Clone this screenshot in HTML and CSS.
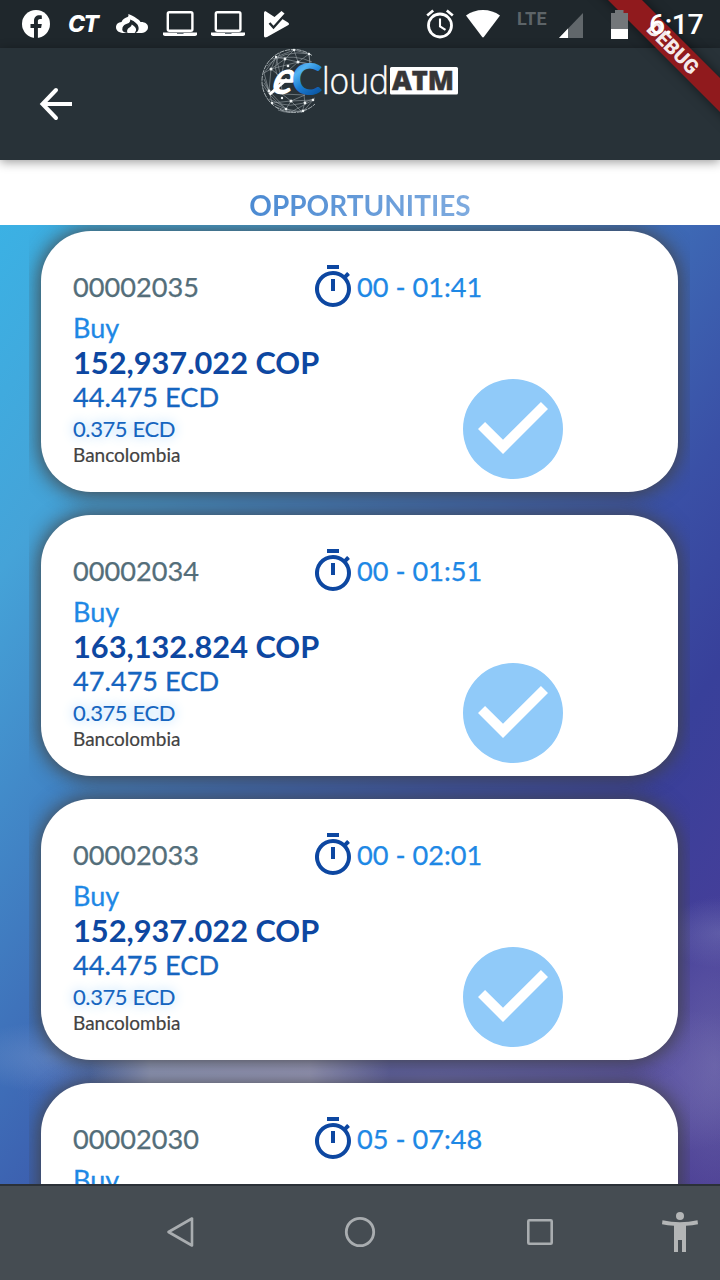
FILE: index.html
```html
<!DOCTYPE html>
<html lang="en">
<head>
<meta charset="utf-8">
<title>eCloudATM</title>
<link rel="stylesheet" href="styles.css">
</head>
<body>
<svg class="defs" width="0" height="0">
  <symbol id="timer" viewBox="0 0 24 24"><path d="M15 1H9v2h6V1zm-4 13h2V8h-2v6zm8.03-6.61l1.42-1.42c-.43-.51-.9-.99-1.41-1.41l-1.42 1.42A8.96 8.96 0 0 0 12 4a9 9 0 1 0 7.03 3.39zM12 20a7 7 0 1 1 0-14 7 7 0 0 1 0 14z"/></symbol>
  <symbol id="check" viewBox="0 0 24 24"><path d="M12 2a10 10 0 1 0 0 20 10 10 0 0 0 0-20zm-2 15l-5-5 1.41-1.41L10 14.17l7.59-7.59L19 8l-9 9z"/></symbol>
  <symbol id="laptop" viewBox="0 0 34 26"><rect x="4.8" y="1.3" width="24.6" height="18.4" rx="1.5" fill="none" stroke="#fff" stroke-width="2.4"/><path d="M0 21.6h34v1.6q0 1.8-2 1.8H2q-2 0-2-1.8z" fill="#fff"/><path d="M14 22h6.500v1h-6.500z" fill="#657078"/></symbol>
</svg>
<div class="screen">
  <header class="statusbar">
    <div class="notifications">
      <svg class="s-fb" width="28" height="28" viewBox="0 0 28 28"><circle cx="14" cy="14" r="14" fill="#fff"/><path d="M12 28V18H8.500v-4H12v-3.200C12 7.200 14.200 5.200 17.400 5.200c1.200 0 2.400.2 2.400.2V9h-1.700c-1.700 0-2.200 1-2.200 2.200V14h3.900l-.7 4h-3.200v10z" fill="#1f272c"/></svg>
      <span class="ct">CT</span>
      <svg class="s-cloud" width="32" height="20" viewBox="0 0 32 20"><path d="M8 19C3 19 0 16.500 0 13.200c0-3 2.300-4.900 5.500-5.200C6.700 5 9 4 11.600 3.100 12.600 2.400 12.600 1.300 12.300 0c3.700 1.200 5.800 2.800 8.100 4.200 2.200 1.300 3.400 2.300 4.100 3.800 4.600-.2 7.500 2 7.500 5.200 0 3.500-3.200 5.800-8 5.800z" fill="#fff"/><path d="M12 19Q5 18.500 6.500 13.500 7.500 10.500 11.500 9.500q3-1 2.700-4 7.300 3 8.300 7.500 .8 4-3 6-2.300-1-2-4.500-3.500 1-5.500 4.500z" fill="#1f272c"/><path d="M11.500 19q-1.500-3.500 2-5.500 2-1 2.300-3 5 3 4.200 6-.5 1.700-2 2.500z" fill="#fff"/></svg>
      <svg class="s-laptop" width="34" height="26"><use href="#laptop"/></svg>
      <svg class="s-laptop2" width="34" height="26"><use href="#laptop"/></svg>
      <svg class="s-play" width="26" height="27" viewBox="0 0 26 27"><path d="M0 2.200C0 .4 1.300 0 2.400.700L10.500 6 17.500 0l3 2.600-3 5 6.500 4q2 1.300 0 2.600L3 26q-3 1.300-3-1z" fill="#fff"/><path d="M5.500 12l4 4.500L20.500 4.200" fill="none" stroke="#1f272c" stroke-width="2.400"/></svg>
    </div>
    <div class="system">
      <svg width="28" height="30" viewBox="0 0 28 30" fill="none" stroke="#fff"><circle cx="14" cy="16.500" r="11.500" stroke-width="2.800"/><path d="M14 9.500v8l5.500 3.300" stroke-width="2.100"/><path d="M1.200 6.500l6-5M26.800 6.500l-6-5" stroke-width="2.700"/></svg>
      <svg class="s-wifi" width="34" height="28" viewBox="0 0 34 28"><path d="M0 5.500Q7.500 0 17 0t17 5.500L18 26.800q-1 1.200-2 0z" fill="#fff"/></svg>
      <span class="lte">LTE</span>
      <svg class="s-signal" width="24" height="25" viewBox="0 0 24 25"><path d="M24 0v25H0z" fill="#61676b"/><path d="M9 15.600V25H0z" fill="#fff"/></svg>
      <svg class="s-battery" width="17" height="30" viewBox="0 0 17 30"><path d="M0 3h4V0h8.500v3H17v17H0z" fill="#73777a"/><path d="M0 19h17v10H0z" fill="#fff"/></svg>
      <span class="clock">6:17</span>
    </div>
  </header>

  <div class="appbar">
    <svg class="back" width="34" height="34" viewBox="0 0 34 34" fill="none" stroke="#fff" stroke-width="4"><path stroke-linecap="round" d="M17 3L3.500 17 17 31"/><path d="M3.500 17H33"/></svg>
    <svg class="logo" width="200" height="70" viewBox="0 0 200 70">
      <defs>
        <linearGradient id="cg" x1="0" y1="0" x2=".5" y2="1"><stop offset="0" stop-color="#1263b4"/><stop offset=".4" stop-color="#52b2f2"/><stop offset=".65" stop-color="#1b7dd2"/><stop offset="1" stop-color="#0c55a2"/></linearGradient>
      </defs>
      <g fill="none" stroke="#98a1a6" stroke-width=".6">
        <path d="M52 9.500A31.500 31.500 0 1 0 55 58" stroke="#b4bcc0" stroke-width=".9" stroke-dasharray="5 .8"/>
        <path d="M4 27L16 11 34 4 49 8 50 18 38 16 25 13 16 11 11 23 4 27 9 45 4 37M34 4l4 12 11-8 1 10M25 13l9-9M11 23l14-10-4 18-10-8 27-7 12 2M16 11l5 20M38 16l-17 15M9 45l13 3 9 7-5 8-14-6-3-12 17 18 16 3-11-11 14-6M22 48l23 1M31 55l22-1-10 12M12 57l19-2M16 61l15 5 22-12M4 33l5 12M9 45l2-22M22 48l-1-17"/>
        <path d="M7 20Q23 3 50 8M11 13q25-5 41 3M3 39q12 20 30 27M9 53q20 13 46-1M18 64q11 5 28-1M20 7q-9 18 0 25M44 49q2 10-3 18"/>
      </g>
      <g fill="#eef2f3"><circle cx="34" cy="4" r="1.200"/><circle cx="25" cy="13" r="1.400"/><circle cx="38" cy="16" r="1.500"/><circle cx="49" cy="8" r="1.200"/><circle cx="16" cy="11" r="1.200"/><circle cx="11" cy="23" r="1.500"/><circle cx="28" cy="20" r="1.300"/><circle cx="9" cy="45" r="1.400"/><circle cx="22" cy="52" r="1.200"/><circle cx="31" cy="55" r="1.500"/><circle cx="45" cy="57" r="1.400"/><circle cx="26" cy="63" r="1.300"/><circle cx="43" cy="65" r="1.300"/><circle cx="53" cy="54" r="1.300"/><circle cx="12" cy="57" r="1.200"/></g>
      <text class="logo-e" transform="translate(9 47.500) skewX(-18)" textLength="22" lengthAdjust="spacingAndGlyphs">e</text>
      <path d="M9.500 48.500L27 33" stroke="#fff" stroke-width="3"/>
      <text class="logo-c" x="31.500" y="48.500" textLength="31" lengthAdjust="spacingAndGlyphs" fill="url(#cg)">C</text>
      <text class="logo-loud" x="62" y="48" textLength="67" lengthAdjust="spacingAndGlyphs">loud</text>
      <rect x="130" y="21" width="68" height="27.500" rx="1.500" fill="#fff"/>
      <text class="logo-atm" x="132" y="44" textLength="62" lengthAdjust="spacingAndGlyphs">ATM</text>
    </svg>
  </div>

  <div class="ribbon"><span>DEBUG</span></div>

  <h1 class="title"><span>OPPORTUNITIES</span></h1>

  <main class="backdrop">
    <div class="list">
      <article class="card">
        <div class="head"><span class="id">00002035</span><svg class="timer"><use href="#timer"/></svg><span class="time">00 - 01:41</span></div>
        <div class="body">
          <div class="details"><p class="side">Buy</p><p class="amount">152,937.022 COP</p><p class="ecd">44.475 ECD</p><p class="fee">0.375 ECD</p><p class="bank">Bancolombia</p></div>
          <svg class="check"><use href="#check"/></svg>
        </div>
      </article>
      <article class="card">
        <div class="head"><span class="id">00002034</span><svg class="timer"><use href="#timer"/></svg><span class="time">00 - 01:51</span></div>
        <div class="body">
          <div class="details"><p class="side">Buy</p><p class="amount">163,132.824 COP</p><p class="ecd">47.475 ECD</p><p class="fee">0.375 ECD</p><p class="bank">Bancolombia</p></div>
          <svg class="check"><use href="#check"/></svg>
        </div>
      </article>
      <article class="card">
        <div class="head"><span class="id">00002033</span><svg class="timer"><use href="#timer"/></svg><span class="time">00 - 02:01</span></div>
        <div class="body">
          <div class="details"><p class="side">Buy</p><p class="amount">152,937.022 COP</p><p class="ecd">44.475 ECD</p><p class="fee">0.375 ECD</p><p class="bank">Bancolombia</p></div>
          <svg class="check"><use href="#check"/></svg>
        </div>
      </article>
      <article class="card">
        <div class="head"><span class="id">00002030</span><svg class="timer"><use href="#timer"/></svg><span class="time">05 - 07:48</span></div>
        <div class="body">
          <div class="details"><p class="side">Buy</p></div>
        </div>
      </article>
    </div>
  </main>

  <nav class="navbar">
    <svg width="30" height="32" viewBox="0 0 30 32" fill="none" stroke="#a9adb0" stroke-width="2.600" stroke-linejoin="round"><path d="M28 2.500v27L4.500 16z"/></svg>
    <svg width="32" height="32" viewBox="0 0 32 32" fill="none" stroke="#a9adb0" stroke-width="2.800"><circle cx="16" cy="16" r="13.700"/></svg>
    <svg width="28" height="28" viewBox="0 0 28 28" fill="none" stroke="#a9adb0" stroke-width="2.600"><rect x="2.300" y="2.300" width="23.400" height="23.400" rx="1"/></svg>
    <svg class="a11y" width="36" height="40" viewBox="0 0 36 40" fill="#b3b5b6"><circle cx="18" cy="4" r="4"/><path d="M.5 8.300Q18 12.300 35.500 8.300l.5 3.900q-5.500 1-12 1.600V40h-4V28h-4v12h-4V13.800Q5.500 13.200 0 12.200z"/></svg>
  </nav>
</div>
</body>
</html>
```

FILE: styles.css
```css
* { box-sizing: border-box; }
body { margin: 0; font-family: Lato, "Liberation Sans", sans-serif; }
p, h1 { margin: 0; }
.defs { position: absolute; }
svg { display: block; flex: none; }

.screen {
  position: relative;
  width: 720px;
  height: 1280px;
  overflow: hidden;
  display: flex;
  flex-direction: column;
  background: #fff;
}

.statusbar {
  height: 48px;
  flex: none;
  display: flex;
  justify-content: space-between;
  align-items: center;
  padding: 0 16px 0 22px;
  background: #1f272c;
  color: #fff;
}
.notifications, .system { display: flex; align-items: center; height: 48px; }
.system { position: relative; z-index: 3; }
.ct {
  width: 31px;
  margin-left: 18px;
  font: italic 800 23px/48px Inter, sans-serif;
  letter-spacing: -1.5px;
}
.s-cloud { margin-left: 17px; }
.s-laptop { margin-left: 15px; }
.s-laptop2 { margin-left: 14px; }
.s-play { margin-left: 19px; }
.s-wifi { margin-left: 12px; }
.lte {
  width: 32px;
  margin-left: 17px;
  margin-bottom: 11px;
  font: 700 18px/24px Roboto, sans-serif;
  letter-spacing: .3px;
  color: #5d6468;
}
.s-signal { margin: 3px 0 0 10px; }
.s-battery { margin: 2px 0 0 28px; }
.clock {
  width: 55px;
  margin-left: 21px;
  margin-top: 2px;
  font: 500 28.500px/48px Roboto, sans-serif;
  letter-spacing: -.5px;
}

.appbar {
  position: relative;
  z-index: 1;
  height: 112px;
  flex: none;
  display: flex;
  align-items: flex-start;
  padding-left: 39px;
  background: #283238;
  box-shadow: 0 2px 10px rgba(0, 0, 0, .4);
}
.back { margin-top: 39px; }
.logo { margin: -2px 0 0 187px; overflow: visible; }
.logo-e { font: 700 47px Lato, sans-serif; fill: #fff; }
.logo-c { font: 900 43px Lato, sans-serif; }
.logo-loud { font: 300 36px "Open Sans", sans-serif; fill: #fff; stroke: #fff; stroke-width: .4; }
.logo-atm { font: 800 27px "Open Sans", sans-serif; fill: #373638; stroke: #373638; stroke-width: .5; }

.ribbon {
  position: absolute;
  z-index: 2;
  left: 573px;
  top: 36px;
  width: 200px;
  height: 24px;
  transform: rotate(45deg);
  background: #901a1d;
  box-shadow: 0 0 12px rgba(0, 0, 0, .5);
  color: rgba(255, 255, 255, .92);
  font: 900 20px/24px Roboto, sans-serif;
  text-align: center;
}

.title {
  height: 65px;
  flex: none;
  text-align: center;
  font-size: 28px;
  font-weight: 700;
  line-height: 35px;
  padding-top: 28px;
}
.title span {
  display: inline-block;
  background: linear-gradient(90deg, #4b8ad2, #7fabdf);
  -webkit-background-clip: text;
  background-clip: text;
  color: transparent;
}

.backdrop {
  height: 959px;
  flex: none;
  overflow: hidden;
  background:
    linear-gradient(90deg, rgba(200, 202, 220, 0) 90px, rgba(200, 202, 220, .65) 150px, rgba(205, 203, 222, .65) 310px, rgba(200, 202, 220, 0) 390px) 0 815px / 720px 50px no-repeat,
    radial-gradient(ellipse 90px 35px at 50px 832px, rgba(130, 160, 210, .4), rgba(120, 150, 205, 0)),
    radial-gradient(ellipse 420px 90px at 430px 855px, rgba(135, 130, 190, .6), rgba(120, 120, 185, 0)),
    radial-gradient(ellipse 80px 170px at 715px 840px, rgba(120, 115, 175, .6), rgba(110, 105, 175, 0)),
    radial-gradient(ellipse 60px 35px at 720px 708px, rgba(105, 105, 175, .6), rgba(105, 105, 175, 0)),
    linear-gradient(127deg, #3bb1e4 0%, #45a3d8 18%, #3f73bb 42%, #3a50a6 61%, #38409a 73%, #463e99 88%, #493b92 100%);
}
.list {
  height: 100%;
  margin: 0 30px 0 29px;
  padding: 6.400px 12px 0;
  overflow: hidden;
}
.card {
  height: 260.200px;
  margin-bottom: 23.840px;
  padding: 32px 0 0 32px;
  border-radius: 50px;
  background: #fff;
  box-shadow: 0 1px 20px 2px rgba(66, 66, 66, .95);
}
.head { display: flex; align-items: center; height: 48px; font-size: 27.150px; }
.head span { padding-bottom: 2px; }
.id { width: 236px; color: #546e7a; -webkit-text-stroke: .25px; }
.timer { width: 48px; height: 48px; fill: #0d47a1; }
.time { color: #1e88e5; -webkit-text-stroke: .25px; }
.body { display: flex; }
.details { width: 380px; white-space: nowrap; }
.side { font-size: 27px; line-height: 33.500px; color: #1e88e5; -webkit-text-stroke: .3px; }
.amount { font-size: 30.750px; line-height: 35.500px; font-weight: 700; color: #0d47a1; }
.ecd { font-size: 27.150px; line-height: 34px; color: #1565c0; -webkit-text-stroke: .3px; }
.fee {
  font-size: 22px;
  line-height: 30.500px;
  letter-spacing: -.4px;
  color: #1565c0;
  text-shadow: 0 0 12px #90caf9;
  -webkit-text-stroke: .1px;
}
.bank { font-size: 19px; line-height: 20px; color: #424242; -webkit-text-stroke: .2px; }
.check { width: 120px; height: 120px; margin-top: 58px; fill: #90caf9; }

.navbar {
  height: 96px;
  flex: none;
  display: flex;
  align-items: center;
  gap: 150px;
  padding: 0 0 2px 164px;
  background: #454c52;
  border-top: 2px solid #2b3138;
}
.navbar .a11y { margin-left: -42px; }
```
